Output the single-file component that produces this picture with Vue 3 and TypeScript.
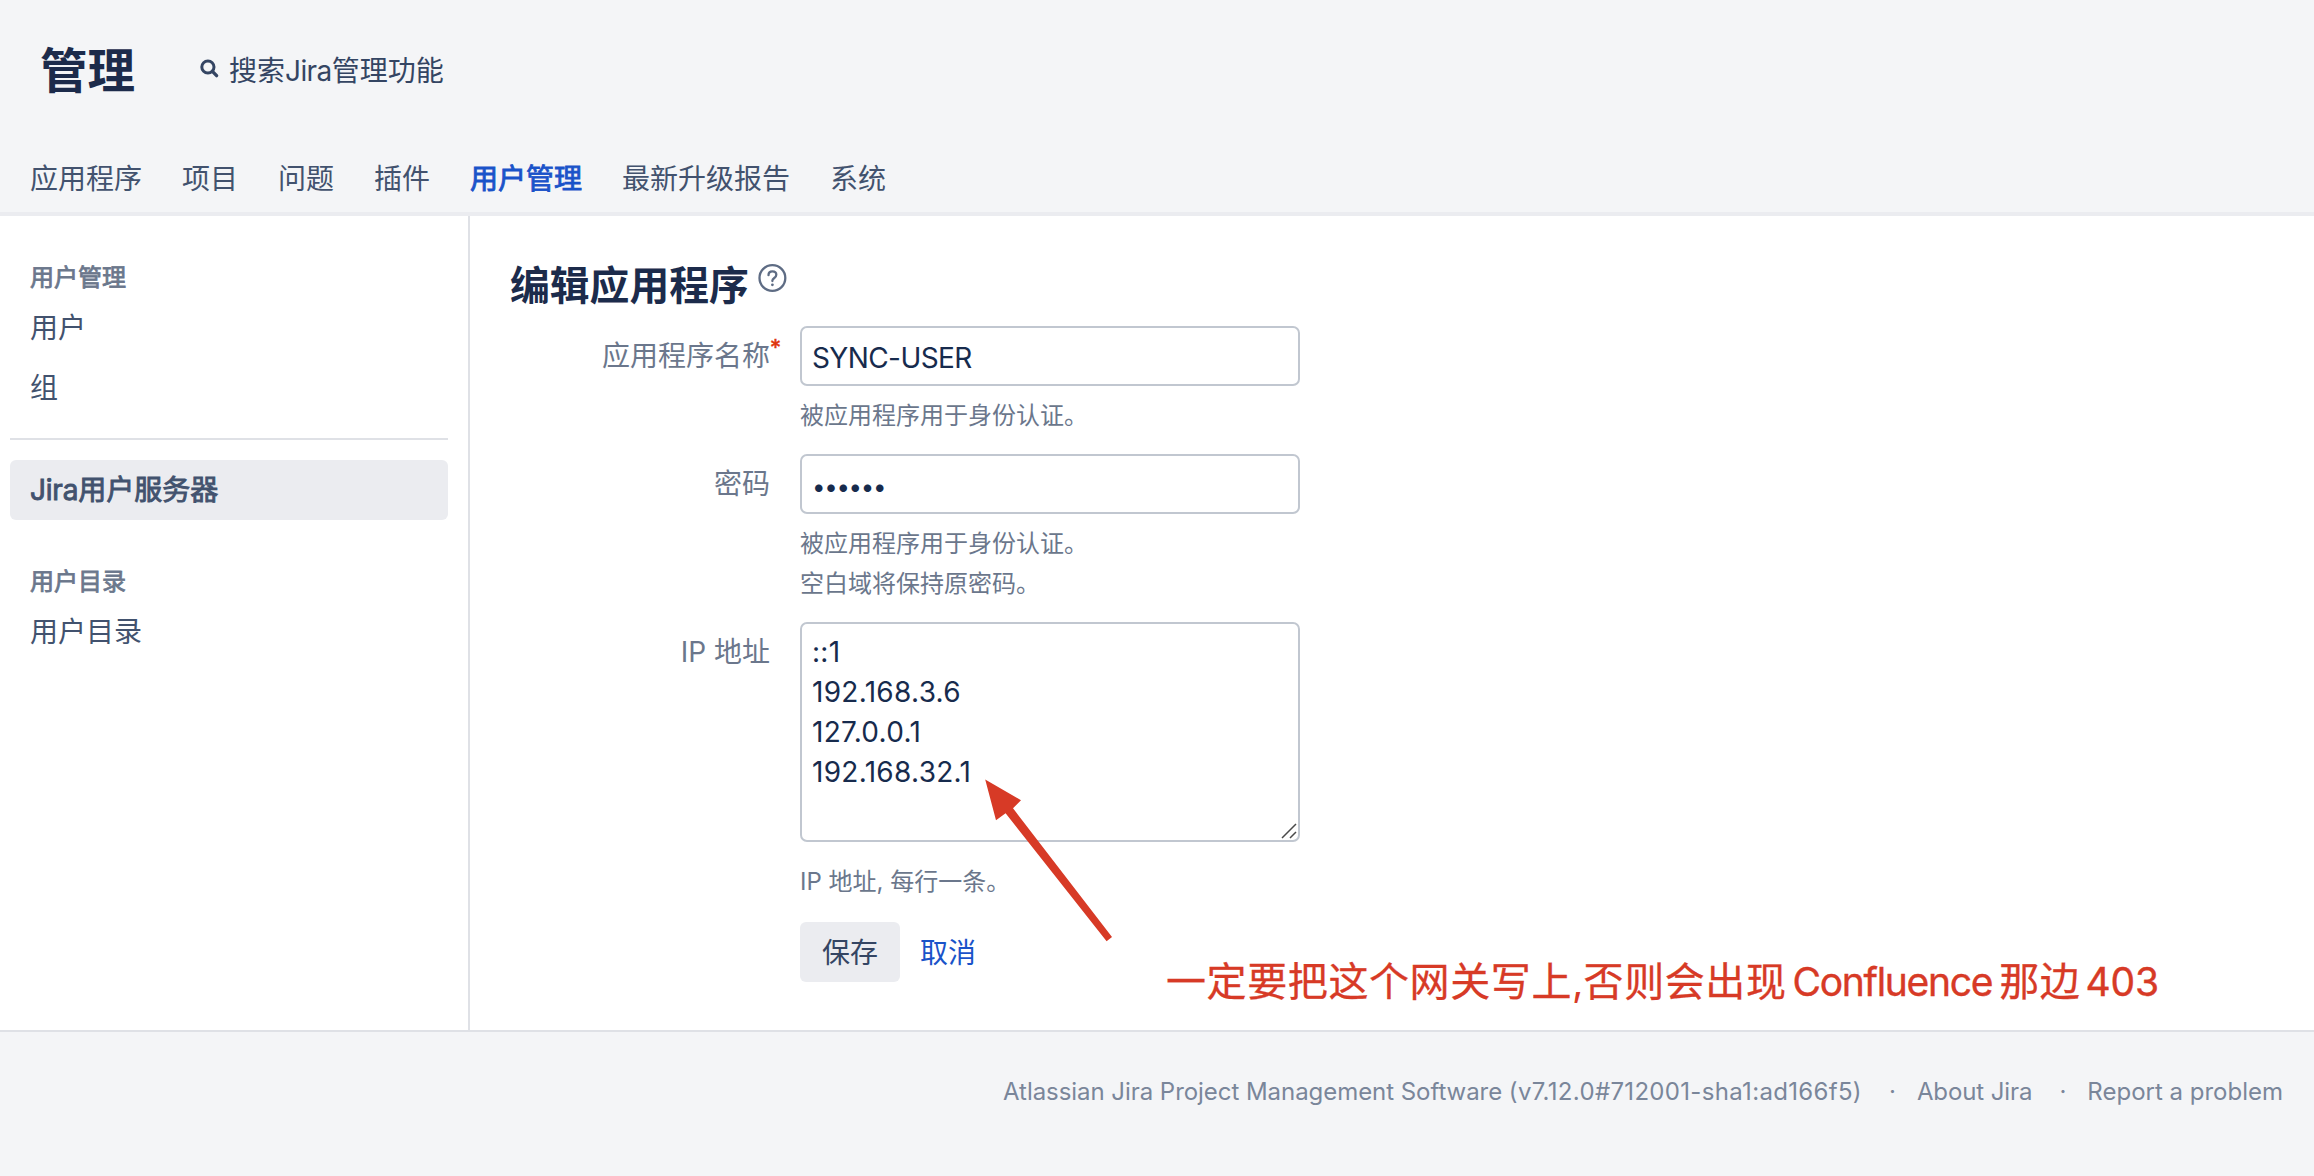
<script setup lang="ts">
import { ref } from 'vue'

interface Tab {
  label: string
  active?: boolean
}

const tabs: Tab[] = [
  { label: '应用程序' },
  { label: '项目' },
  { label: '问题' },
  { label: '插件' },
  { label: '用户管理', active: true },
  { label: '最新升级报告' },
  { label: '系统' },
]

const appName = ref('SYNC-USER')
const password = ref('secret')
const addresses = ref(['::1', '192.168.3.6', '127.0.0.1', '192.168.32.1'].join('\n'))
</script>

<template>
  <div class="page">
    <header class="header">
      <div class="title-row">
        <h1 class="title">管理</h1>
        <a class="search">
          <svg class="search-icon" width="20" height="20" viewBox="0 0 20 20">
            <circle cx="7.9" cy="8" r="6.1" fill="none" stroke="currentColor" stroke-width="3" />
            <path d="M12.4 12.4 16.6 16.6" stroke="currentColor" stroke-width="3.4" stroke-linecap="round" />
          </svg>
          <span>搜索<span class="jira">Jira</span>管理功能</span>
        </a>
      </div>
      <nav class="tabs">
        <a v-for="tab in tabs" :key="tab.label" class="tab" :class="{ active: tab.active }">{{ tab.label }}</a>
      </nav>
    </header>

    <div class="body">
      <aside class="sidebar">
        <h2 class="group">用户管理</h2>
        <a class="item">用户</a>
        <a class="item">组</a>
        <hr class="rule" />
        <a class="item selected"><span class="jira">Jira</span>用户服务器</a>
        <h2 class="group second">用户目录</h2>
        <a class="item">用户目录</a>
      </aside>

      <main class="content">
        <div class="heading">
          <h2 class="heading-text">编辑应用程序</h2>
          <svg class="help" width="30" height="30" viewBox="0 0 30 30" fill="none" stroke="currentColor">
            <circle cx="15.4" cy="15" r="12.9" stroke-width="2.3" />
            <path d="M11.5 12.2c0-2.3 1.6-3.9 3.9-3.9s3.9 1.5 3.9 3.5c0 1.6-.9 2.4-2 3.2-1.2.9-1.9 1.5-1.9 2.6v.4" stroke-width="2.3" stroke-linecap="round" />
            <circle cx="15.4" cy="21.8" r="1.4" fill="currentColor" stroke="none" />
          </svg>
        </div>

        <form class="form" @submit.prevent>
          <div class="row name-row">
            <label class="label">应用程序名称<span class="required">*</span></label>
            <div class="field">
              <input v-model="appName" class="input name" type="text" />
              <p class="hint">被应用程序用于身份认证。</p>
            </div>
          </div>
          <div class="row password-row">
            <label class="label">密码</label>
            <div class="field">
              <input v-model="password" class="input password" type="password" />
              <p class="hint">被应用程序用于身份认证。<br />空白域将保持原密码。</p>
            </div>
          </div>
          <div class="row ip-row">
            <label class="label">IP 地址</label>
            <div class="field">
              <div class="area-wrap">
                <textarea v-model="addresses" class="input area" spellcheck="false"></textarea>
                <svg class="grip" width="16" height="16" viewBox="0 0 16 16" stroke="#4a4a4a" stroke-width="1.5">
                  <path d="M1 15 15 1M9 15 15 9" />
                </svg>
              </div>
              <p class="hint ip-hint">IP 地址, 每行一条。</p>
              <div class="actions">
                <button class="save" type="button">保存</button>
                <a class="cancel">取消</a>
              </div>
            </div>
          </div>
        </form>
      </main>

      <svg class="arrow" width="140" height="170" viewBox="980 775 140 170">
        <path d="M985.2 779.5 1021 800.2 1013 808.3 1112 937 1106.6 941.3 1005.6 813.3 996 820.2Z" fill="#d73a26" />
      </svg>
      <div class="note">
        <span class="note-cjk">一定要把这个网关写上</span><span class="note-comma">,</span><span class="note-cjk">否则会出现</span><span class="note-word">Confluence</span><span class="note-cjk">那边</span><span class="note-num">403</span>
      </div>
    </div>

    <footer class="footer">
      <span class="version">Atlassian Jira Project Management Software <span class="build">(v7.12.0#712001-sha1:ad166f5)</span></span>
      <span class="dot">·</span>
      <span class="about">About Jira</span>
      <span class="dot">·</span>
      <span class="report">Report a problem</span>
    </footer>
  </div>
</template>

<style>
body {
  margin: 0;
  background: #f4f5f7;
}
</style>

<style scoped>
.page {
  width: 2314px;
  height: 1176px;
  overflow: hidden;
  display: flex;
  flex-direction: column;
  background: #f4f5f7;
  color: #1c2b4b;
  font-family: Inter, "Noto Sans CJK SC", sans-serif;
  font-size: 28px;
  line-height: 40px;
}
h1,
h2,
p {
  margin: 0;
}
.header {
  box-sizing: border-box;
  height: 216px;
  flex: none;
  border-bottom: 4px solid #ebecf0;
  display: flex;
  flex-direction: column;
  justify-content: space-between;
}
.title-row {
  display: flex;
  align-items: center;
  height: 142px;
  padding-left: 40px;
}
.title {
  width: 160px;
  font-size: 47.5px;
  line-height: 56px;
  font-weight: 600;
}
.search {
  display: flex;
  align-items: center;
  color: #344563;
}
.search-icon {
  width: 20px;
  margin-right: 9px;
  margin-top: -4px;
}
.jira {
  letter-spacing: -0.6px;
}
.tabs {
  display: flex;
  gap: 40px;
  height: 54px;
  padding-left: 30px;
  margin-bottom: -4px;
}
.tab {
  box-sizing: border-box;
  height: 58px;
  line-height: 34px;
  color: #42526e;
}
.tab.active {
  color: #1a53c9;
  -webkit-text-stroke: 0.9px currentColor;
  border-bottom: 4px solid #1a53c9;
}
.body {
  position: relative;
  display: flex;
  flex: none;
  height: 814px;
  background: #fff;
  border-bottom: 2px solid #dfe1e6;
}
.sidebar {
  box-sizing: border-box;
  width: 470px;
  border-right: 2px solid #dfe1e6;
  padding: 41px 20px 0 10px;
  color: #42526e;
}
.group {
  padding-left: 20px;
  font-size: 24px;
  line-height: 41px;
  font-weight: 400;
  -webkit-text-stroke: 0.8px currentColor;
  color: #6b778c;
}
.group.second {
  margin-top: 41px;
}
.item {
  display: block;
  height: 60px;
  line-height: 61px;
  padding-left: 20px;
  border-radius: 6px;
}
.rule {
  height: 2px;
  border: 0;
  margin: 20px 0;
  background: #dfe1e6;
}
.selected {
  background: #ebecf0;
  -webkit-text-stroke: 0.9px currentColor;
}
.selected .jira {
  letter-spacing: -0.2px;
}
.content {
  flex: 1;
  padding: 40px 0 0 40px;
}
.heading {
  display: flex;
  align-items: flex-start;
  height: 70px;
}
.heading-text {
  width: 247px;
  font-size: 39.8px;
  line-height: 60px;
  font-weight: 600;
}
.help {
  color: #5e6c84;
  margin-top: 7px;
}
.row {
  display: flex;
}
.name-row {
  height: 128px;
}
.password-row {
  height: 168px;
}
.label {
  position: relative;
  width: 260px;
  margin-right: 30px;
  line-height: 61px;
  text-align: right;
  color: #6b778c;
}
.required {
  position: absolute;
  left: 260px;
  top: -4px;
  font-size: 22px;
  line-height: 50px;
  color: #de350b;
  -webkit-text-stroke: 0.5px currentColor;
}
.field {
  width: 500px;
}
.input {
  display: block;
  box-sizing: border-box;
  width: 500px;
  height: 60px;
  margin: 0;
  padding: 4px 10px 0;
  border: 2px solid #c1c7d0;
  border-radius: 7px;
  background: #fff;
  color: #172b4d;
  font: inherit;
  outline: none;
}
.name {
  letter-spacing: -0.6px;
}
.password {
  font-size: 24px;
  letter-spacing: -1.3px;
}
.area-wrap {
  position: relative;
}
.area {
  height: 220px;
  padding: 8px 10px;
  line-height: 40px;
  letter-spacing: 0.3px;
  resize: none;
  overflow: hidden;
}
.grip {
  position: absolute;
  right: 3px;
  bottom: 3px;
}
.hint {
  margin-top: 10px;
  font-size: 24px;
  line-height: 40px;
  color: #6b778c;
}
.ip-hint {
  margin-top: 20px;
}
.actions {
  display: flex;
  align-items: center;
  gap: 20px;
  margin-top: 20px;
}
.save {
  width: 100px;
  height: 60px;
  padding: 1px 0 0;
  border: 0;
  border-radius: 6px;
  background: #ebecf0;
  color: #344563;
  font: inherit;
}
.cancel {
  padding-top: 1px;
  color: #1a53c9;
}
.arrow {
  position: absolute;
  left: 980px;
  top: 559px;
}
.note {
  position: absolute;
  left: 1166px;
  top: 736px;
  display: flex;
  font-size: 40px;
  line-height: 60px;
  color: #d73a26;
  white-space: nowrap;
}
.note-cjk {
  letter-spacing: 0.6px;
  -webkit-text-stroke: 0.3px currentColor;
}
.note-word {
  margin: 0 7px 0 6px;
  font-size: 39px;
  letter-spacing: -1.3px;
  -webkit-text-stroke: 0.4px currentColor;
}
.note-num {
  margin-left: 5px;
  font-size: 39px;
  letter-spacing: -0.1px;
  -webkit-text-stroke: 0.4px currentColor;
}
.footer {
  display: flex;
  justify-content: flex-end;
  padding: 40px 31px 0 0;
  font-size: 24px;
  color: #7a869a;
}
.version {
  letter-spacing: -0.05px;
}
.build {
  letter-spacing: 0.32px;
}
.about {
  letter-spacing: -0.1px;
}
.dot {
  box-sizing: border-box;
  width: 55px;
  padding-left: 6px;
  text-align: center;
}
</style>
